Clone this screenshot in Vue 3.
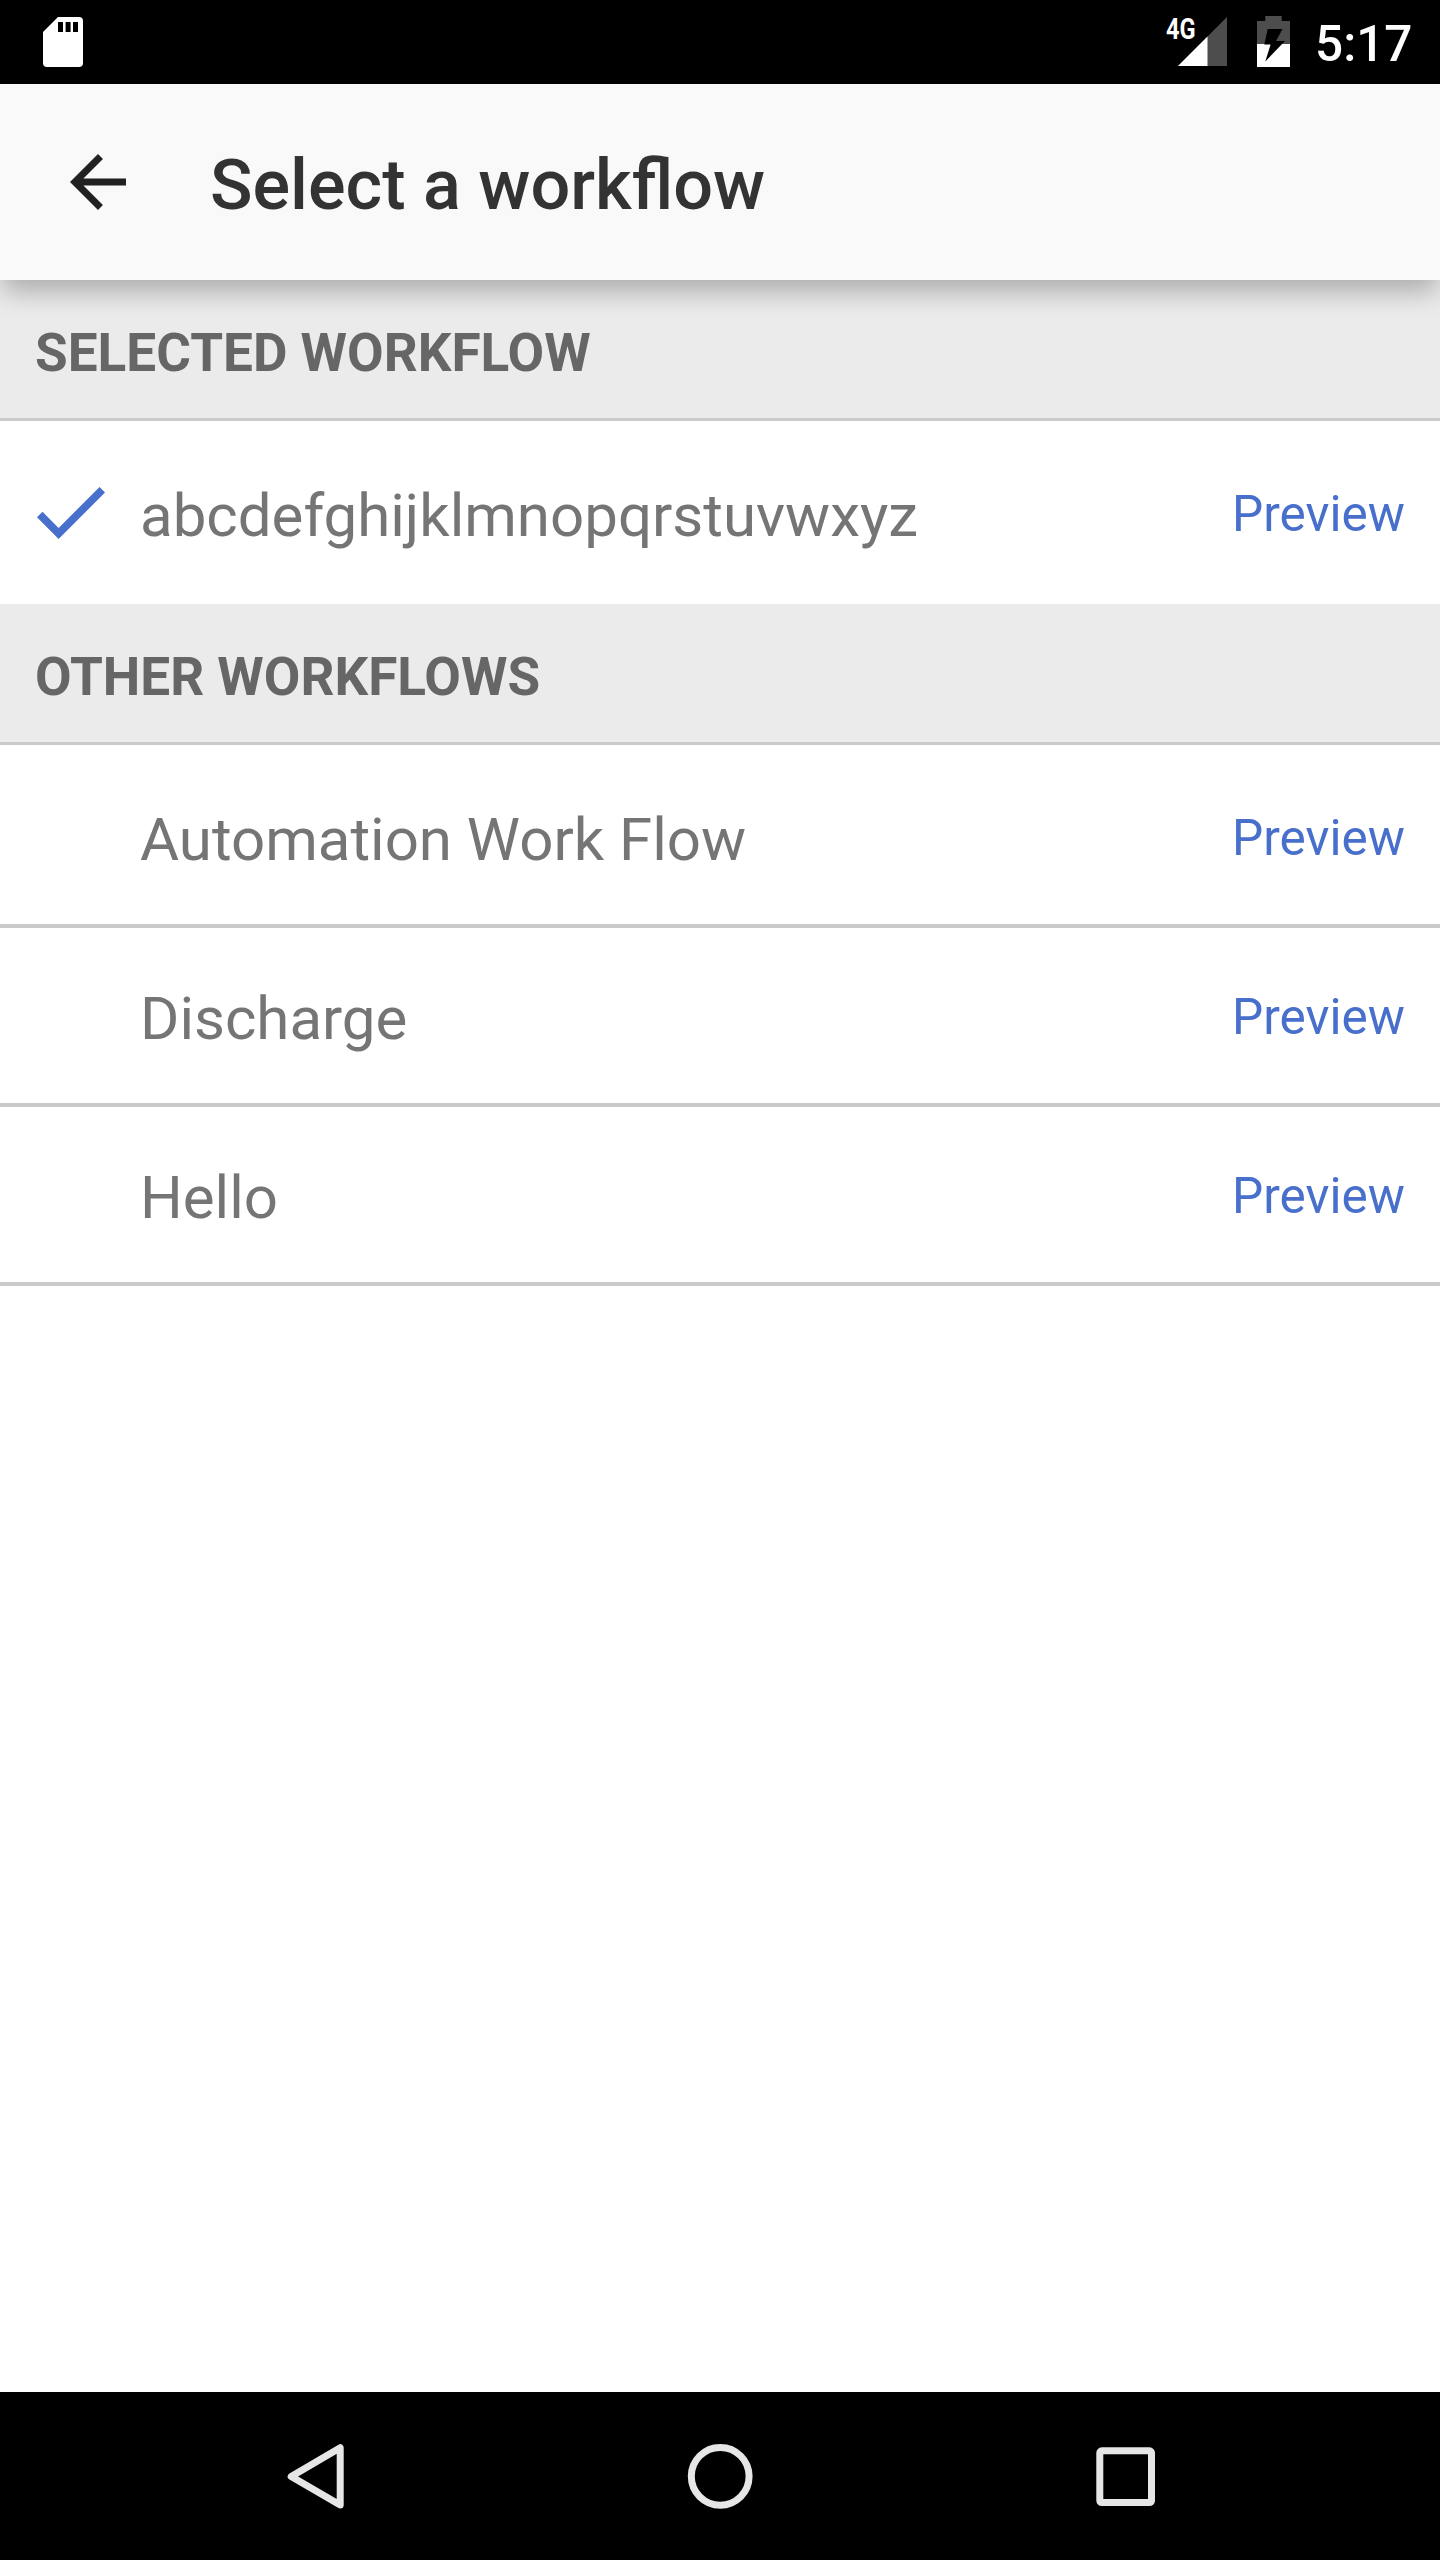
<script setup>
const selected = [{ name: 'abcdefghijklmnopqrstuvwxyz', checked: true }]
const others = [{ name: 'Automation Work Flow' }, { name: 'Discharge' }, { name: 'Hello' }]
const sections = [
  { title: 'SELECTED WORKFLOW', rows: selected, last: false },
  { title: 'OTHER WORKFLOWS', rows: others, last: true },
]
</script>

<template>
  <div class="screen">
    <div class="status-bar">
      <svg class="sd-card" width="40" height="50" viewBox="0 0 40 50">
        <path fill="#fff" d="M15 0H36a4 4 0 0 1 4 4V46a4 4 0 0 1-4 4H4a4 4 0 0 1-4-4V15z" />
        <path d="M15 5h5v10h-5zM22.6 5h5v10h-5zM30 5h5v10h-5z" />
      </svg>
      <div class="status-right">
        <span class="network">4G</span>
        <svg class="signal" width="49" height="49" viewBox="0 0 49 49">
          <path fill="#4d4d4d" d="M49 0V49H0z" />
          <path fill="#fff" d="M29.5 19.5V49H0z" />
        </svg>
        <svg class="battery" width="33" height="51" viewBox="0 0 33 51">
          <path fill="#4d4d4d" d="M8.3 0H24.7V5H33V28H0V5H8.3z" />
          <path fill="#fff" d="M0 28H33V51H0z" />
          <path d="M10.7 13H25.5L19 25H28L8.3 45.5 13.6 28.5H7.3z" />
        </svg>
        <span class="clock">5:17</span>
      </div>
    </div>

    <header class="app-bar">
      <svg width="84" height="84" viewBox="0 0 24 24">
        <path fill="#212121" d="M20 11H7.83l5.59-5.59L12 4l-8 8 8 8 1.41-1.41L7.83 13H20z" />
      </svg>
      <h1>Select a workflow</h1>
    </header>

    <main>
      <section v-for="s in sections" :key="s.title">
        <h2>{{ s.title }}</h2>
        <ul>
          <li v-for="r in s.rows" :key="r.name" :class="{ divided: s.last }">
            <span class="mark">
              <svg v-if="r.checked" width="68" height="52" viewBox="3.41 5.59 17.59 13.41">
                <path fill="#476fcb" d="M9 16.17L4.83 12l-1.42 1.41L9 19 21 7l-1.41-1.41z" />
              </svg>
            </span>
            <span class="name">{{ r.name }}</span>
            <a class="preview">Preview</a>
          </li>
        </ul>
      </section>
    </main>

    <nav class="nav-bar">
      <span>
        <svg width="84" height="84" viewBox="0 0 84 84">
          <path d="M67.2 13.7V71.1L18.2 42.4z" stroke-linejoin="round" />
        </svg>
      </span>
      <span>
        <svg width="84" height="84" viewBox="0 0 84 84">
          <circle cx="42.2" cy="42.3" r="28.9" />
        </svg>
      </span>
      <span>
        <svg width="84" height="84" viewBox="0 0 84 84">
          <rect x="16.8" y="16.8" width="51.7" height="51.7" rx="2" />
        </svg>
      </span>
    </nav>
  </div>
</template>

<style>
body {
  margin: 0;
  background: #fff;
}
</style>

<style scoped>
.screen {
  display: flex;
  flex-direction: column;
  width: 1440px;
  height: 2560px;
  overflow: hidden;
  background: #fff;
  font-family: Roboto, sans-serif;
}

svg {
  display: block;
  flex: none;
}

.status-bar {
  display: flex;
  flex: none;
  justify-content: space-between;
  box-sizing: border-box;
  height: 84px;
  padding: 0 29px 0 43px;
  background: #000;
  color: #fff;
}

.sd-card {
  margin-top: 17px;
}

.status-right {
  display: flex;
  align-items: flex-start;
}

.network {
  width: 12px;
  margin-top: 12px;
  font-size: 29.5px;
  font-weight: 700;
  line-height: 34px;
  white-space: nowrap;
  transform: scaleX(0.8);
  transform-origin: 0 0;
}

.signal {
  margin-top: 17px;
}

.battery {
  margin: 16px 0 0 30px;
}

.clock {
  width: 96px;
  margin: 15px 0 0 25px;
  font-size: 49.5px;
  font-weight: 500;
  line-height: 58px;
  white-space: nowrap;
}

.app-bar {
  position: relative;
  z-index: 1;
  display: flex;
  flex: none;
  align-items: center;
  gap: 70px;
  height: 196px;
  padding-left: 56px;
  background: #f9f9f9;
  box-shadow: 0 14px 24px -2px rgba(0, 0, 0, 0.26);
}

h1 {
  margin: 0;
  padding-top: 6px;
  color: #333;
  font-size: 70.2px;
  font-weight: 500;
  line-height: 82px;
}

main {
  flex: 1;
}

h2 {
  display: flex;
  align-items: center;
  box-sizing: border-box;
  height: 141px;
  margin: 0;
  padding: 8px 35px 0;
  border-bottom: 3px solid #cacaca;
  background: #ebebeb;
  color: #666;
  font-size: 53.1px;
  font-weight: 700;
  line-height: 62px;
}

ul {
  margin: 0;
  padding: 4px 0 0;
  list-style: none;
}

li {
  display: flex;
  align-items: center;
  height: 175px;
  padding: 0 35px;
  border-bottom: 4px solid transparent;
}

.divided {
  border-bottom-color: #cacaca;
}

.mark {
  flex: none;
  width: 105px;
}

.mark svg {
  margin-left: 2px;
}

.name {
  flex: 1;
  padding-top: 6px;
  color: #757575;
  font-size: 60px;
  line-height: 71px;
}

.preview {
  padding-top: 3px;
  color: #476fcb;
  font-size: 49.5px;
  line-height: 58px;
}

.nav-bar {
  display: flex;
  flex: none;
  justify-content: center;
  align-items: center;
  height: 168px;
  background: #000;
}

.nav-bar span {
  display: flex;
  justify-content: center;
  width: 405px;
}

.nav-bar svg {
  fill: none;
  stroke: #e6e6e6;
  stroke-width: 7;
}
</style>
